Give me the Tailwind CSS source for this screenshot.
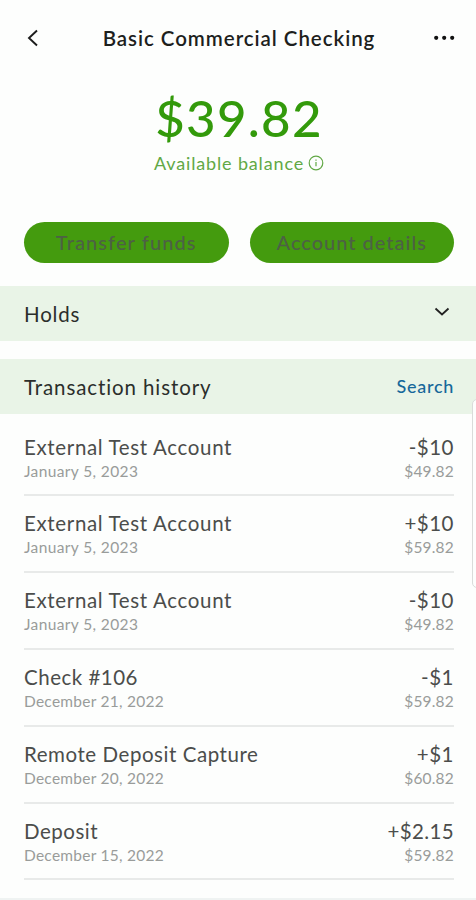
<!DOCTYPE html>
<html lang="en">
<head>
<meta charset="utf-8">
<meta name="viewport" content="width=device-width, initial-scale=1">
<title>Basic Commercial Checking</title>
<script src="https://cdn.jsdelivr.net/npm/@tailwindcss/browser@4"></script>
</head>
<body class="bg-[#fdfefd] font-['Lato','Open_Sans',sans-serif] text-[#4b4d4b] overflow-hidden">
<main class="relative h-[900px] w-[476px] overflow-hidden whitespace-nowrap">
  <header class="flex h-[75px] items-center justify-between pl-[26px] pr-[20px]">
    <button class="flex w-[20px]" aria-label="Back">
      <svg class="h-[18px] w-[14px]" viewBox="0 0 14 18" fill="none" stroke="#1c1c1c" stroke-width="1.9"><path d="M11 1.5 3 9l8 7.5"/></svg>
    </button>
    <h1 class="text-[20.5px] font-semibold leading-6 tracking-[0.95px] text-[#1d1f1d]">Basic Commercial Checking</h1>
    <button class="flex w-[24px]" aria-label="More">
      <svg class="h-[6px] w-[24px]" viewBox="0 0 24 6" fill="#111"><circle cx="4.2" cy="2.8" r="2.1"/><circle cx="12.2" cy="2.8" r="2.1"/><circle cx="20.2" cy="2.8" r="2.1"/></svg>
    </button>
  </header>

  <section class="flex h-[146px] flex-col items-center pl-[2px] pt-[13px]">
    <p class="text-[51px] font-medium leading-[60px] tracking-[1.3px] text-[#339a0b]">$39.82</p>
    <p class="flex items-center gap-[4px] pt-[1px] text-[18px] leading-[28px] tracking-[0.85px] text-[#61a845]">
      <span>Available balance</span>
      <svg class="h-[16px] w-[16px]" viewBox="0 0 16 16" fill="none" stroke="#61a845" stroke-width="1.2"><circle cx="8" cy="8" r="6.8"/><path d="M8 7v4.3M8 4.4v1.4"/></svg>
    </p>
  </section>

  <div class="flex h-[65px] items-start gap-[21px] pl-[24px] pr-[22px] pt-[0.5px]">
    <button class="h-[41px] flex-1 rounded-full bg-[#449b0e] text-[20px] font-medium tracking-[1.1px] text-[#4d6145]">Transfer funds</button>
    <button class="h-[41px] flex-1 rounded-full bg-[#449b0e] text-[20px] font-medium tracking-[1px] text-[#4d6145]">Account details</button>
  </div>

  <section class="flex h-[55px] items-center justify-between bg-[#e9f4e7] pl-[24px] pr-[22px]">
    <h2 class="pt-[2px] text-[20.5px] tracking-[0.8px] text-[#2b2e2b]">Holds</h2>
    <svg class="mb-[4px] mr-[4px] h-[10px] w-[16px]" viewBox="0 0 16 10" fill="none" stroke="#222" stroke-width="1.8"><path d="m1.5 1.5 6.5 6 6.5-6"/></svg>
  </section>

  <section class="mt-[18px]">
    <div class="flex h-[55px] items-center justify-between bg-[#e9f4e7] pl-[24px] pr-[22px]">
      <h2 class="pt-[2px] text-[20.5px] tracking-[0.9px] text-[#2b2e2b]">Transaction history</h2>
      <a class="text-[18px] font-medium tracking-[0.7px] text-[#17689a]">Search</a>
    </div>
    <ul class="pl-[24px] pr-[22px] pt-[5.7px]">
      <li class="flex h-[76.8px] items-start justify-between border-b-2 border-[#e8eae9] pt-[14px]">
        <div><p class="text-[20.5px] leading-[26px] tracking-[0.65px]">External Test Account</p><p class="text-[15.5px] leading-[22px] tracking-[0.38px] text-[#999c9a]">January 5, 2023</p></div>
        <div class="text-right"><p class="text-[20.5px] leading-[26px] tracking-[0.5px]">-$10</p><p class="text-[15.5px] leading-[22px] tracking-[0.2px] text-[#999c9a]">$49.82</p></div>
      </li>
      <li class="flex h-[76.8px] items-start justify-between border-b-2 border-[#e8eae9] pt-[14px]">
        <div><p class="text-[20.5px] leading-[26px] tracking-[0.65px]">External Test Account</p><p class="text-[15.5px] leading-[22px] tracking-[0.38px] text-[#999c9a]">January 5, 2023</p></div>
        <div class="text-right"><p class="text-[20.5px] leading-[26px] tracking-[0.5px]">+$10</p><p class="text-[15.5px] leading-[22px] tracking-[0.2px] text-[#999c9a]">$59.82</p></div>
      </li>
      <li class="flex h-[76.8px] items-start justify-between border-b-2 border-[#e8eae9] pt-[14px]">
        <div><p class="text-[20.5px] leading-[26px] tracking-[0.65px]">External Test Account</p><p class="text-[15.5px] leading-[22px] tracking-[0.38px] text-[#999c9a]">January 5, 2023</p></div>
        <div class="text-right"><p class="text-[20.5px] leading-[26px] tracking-[0.5px]">-$10</p><p class="text-[15.5px] leading-[22px] tracking-[0.2px] text-[#999c9a]">$49.82</p></div>
      </li>
      <li class="flex h-[76.8px] items-start justify-between border-b-2 border-[#e8eae9] pt-[14px]">
        <div><p class="text-[20.5px] leading-[26px] tracking-[0.5px]">Check #106</p><p class="text-[15.5px] leading-[22px] tracking-[0.25px] text-[#999c9a]">December 21, 2022</p></div>
        <div class="text-right"><p class="text-[20.5px] leading-[26px] tracking-[0.5px]">-$1</p><p class="text-[15.5px] leading-[22px] tracking-[0.2px] text-[#999c9a]">$59.82</p></div>
      </li>
      <li class="flex h-[76.8px] items-start justify-between border-b-2 border-[#e8eae9] pt-[14px]">
        <div><p class="text-[20.5px] leading-[26px] tracking-[0.55px]">Remote Deposit Capture</p><p class="text-[15.5px] leading-[22px] tracking-[0.25px] text-[#999c9a]">December 20, 2022</p></div>
        <div class="text-right"><p class="text-[20.5px] leading-[26px] tracking-[0.5px]">+$1</p><p class="text-[15.5px] leading-[22px] tracking-[0.2px] text-[#999c9a]">$60.82</p></div>
      </li>
      <li class="flex h-[76.8px] items-start justify-between border-b-2 border-[#e8eae9] pt-[14px]">
        <div><p class="text-[20.5px] leading-[26px] tracking-[0.5px]">Deposit</p><p class="text-[15.5px] leading-[22px] tracking-[0.25px] text-[#999c9a]">December 15, 2022</p></div>
        <div class="text-right"><p class="text-[20.5px] leading-[26px] tracking-[0.35px]">+$2.15</p><p class="text-[15.5px] leading-[22px] tracking-[0.2px] text-[#999c9a]">$59.82</p></div>
      </li>
    </ul>
  </section>
  <div class="absolute bottom-0 left-0 h-[2px] w-full bg-[#eff3f2]"></div>
  <div class="absolute -right-[6px] top-[399px] h-[189px] w-[10px] rounded-[5px] border border-[#d9dcda] bg-[#fdfefd]"></div>
</main>
</body>
</html>
